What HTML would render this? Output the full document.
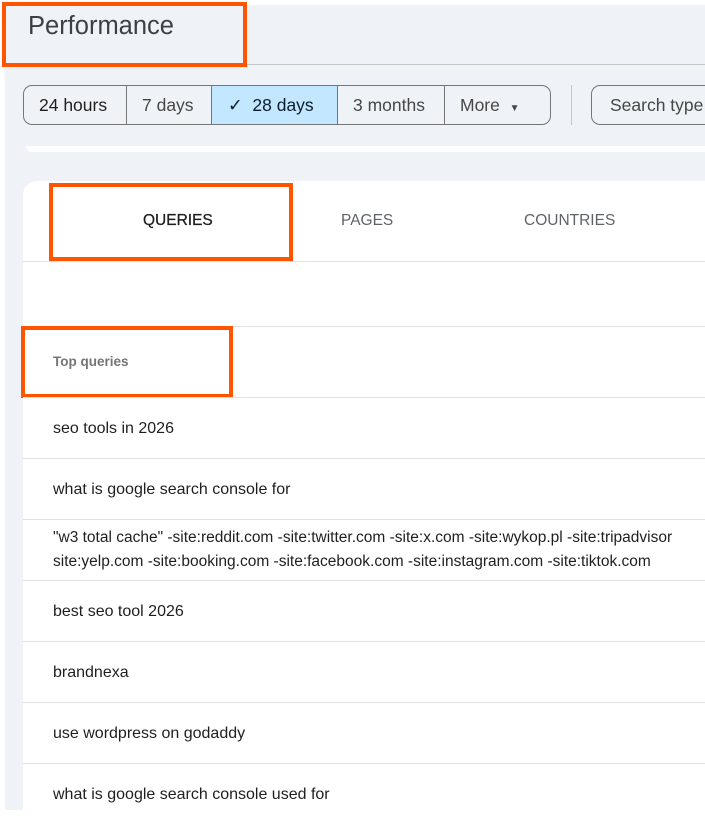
<!DOCTYPE html>
<html><head><style>
*{margin:0;padding:0;box-sizing:border-box}
body{width:705px;height:810px;overflow:hidden;background:#fff;font-family:"Liberation Sans",sans-serif;position:relative;color:#202124}
.bg{position:absolute;left:5px;top:5px;width:700px;height:805px;background:#eff3f8}
.hline{position:absolute;left:245px;top:64px;width:460px;height:1px;background:#c4c7c5}
.abs{position:absolute}
.ob{position:absolute;border:4px solid #ff5500}
.seg{position:absolute;top:85px;left:23px;height:40px;border:1px solid #747775;border-radius:9px;display:flex;overflow:hidden;background:#eff3f8}
.seg div{height:38px;line-height:38px;font-size:17.5px;color:#444746;padding:0 15px;border-right:1px solid #747775;white-space:nowrap}
.seg div:last-child{border-right:none}
.card{position:absolute;left:23px;top:181px;width:700px;height:640px;background:#fff;border-radius:14px 0 0 0}
.row{position:absolute;left:23px;width:682px;height:1px;background:#e1e3e1}
.t{position:absolute;left:53px;font-size:16px;color:#1f1f1f;white-space:nowrap}
</style></head><body>
<div class="bg"></div>
<div class="abs" style="left:28px;top:12px;font-size:25.5px;color:#3c4043">Performance</div>
<div class="hline"></div>
<div class="ob" style="left:2px;top:2px;width:245px;height:65px"></div>
<div class="seg">
<div style="color:#1f1f1f;width:103px">24 hours</div>
<div style="width:85px">7 days</div>
<div style="background:#c2e7ff;color:#0b1d2a;width:126px;padding-left:16px">&#10003;&nbsp; 28 days</div>
<div style="width:107px">3 months</div>
<div style="width:105px">More &nbsp;<span style="font-size:10px">&#9660;</span></div>
</div>
<div class="abs" style="left:571px;top:85px;width:1px;height:40px;background:#c4c7c5"></div>
<div class="abs" style="left:591px;top:85px;width:150px;height:40px;border:1px solid #747775;border-radius:9px;line-height:38px;padding-left:18px;font-size:17.5px;color:#444746">Search type</div>
<div class="abs" style="left:26px;top:146px;width:690px;height:6px;background:#fff;border-radius:0 0 0 10px"></div>
<div class="card"></div>
<div class="abs" style="left:143px;top:212px;font-size:15.5px;color:#1f1f1f;-webkit-text-stroke:0.3px #1f1f1f">QUERIES</div>
<div class="abs" style="left:341px;top:212px;font-size:15.5px;color:#5f6368">PAGES</div>
<div class="abs" style="left:524px;top:212px;font-size:15.5px;color:#5f6368">COUNTRIES</div>
<div class="ob" style="left:49px;top:183px;width:244px;height:78px"></div>
<div class="row" style="top:261px"></div>
<div class="row" style="top:326px"></div>
<div class="abs" style="left:53px;top:354px;font-size:13.5px;color:#757575;font-weight:bold">Top queries</div>
<div class="ob" style="left:21px;top:326px;width:212px;height:72px"></div>
<div class="row" style="top:397px"></div>
<div class="t" style="top:420px">seo tools in 2026</div>
<div class="row" style="top:458px"></div>
<div class="t" style="top:481px">what is google search console for</div>
<div class="row" style="top:519px"></div>
<div class="t" style="top:529px;font-size:15.5px">"w3 total cache" -site:reddit.com -site:twitter.com -site:x.com -site:wykop.pl -site:tripadvisor</div>
<div class="t" style="top:553px;font-size:15.5px">site:yelp.com -site:booking.com -site:facebook.com -site:instagram.com -site:tiktok.com</div>
<div class="row" style="top:580px"></div>
<div class="t" style="top:603px">best seo tool 2026</div>
<div class="row" style="top:641px"></div>
<div class="t" style="top:664px">brandnexa</div>
<div class="row" style="top:702px"></div>
<div class="t" style="top:725px">use wordpress on godaddy</div>
<div class="row" style="top:763px"></div>
<div class="t" style="top:786px">what is google search console used for</div>
</body></html>
